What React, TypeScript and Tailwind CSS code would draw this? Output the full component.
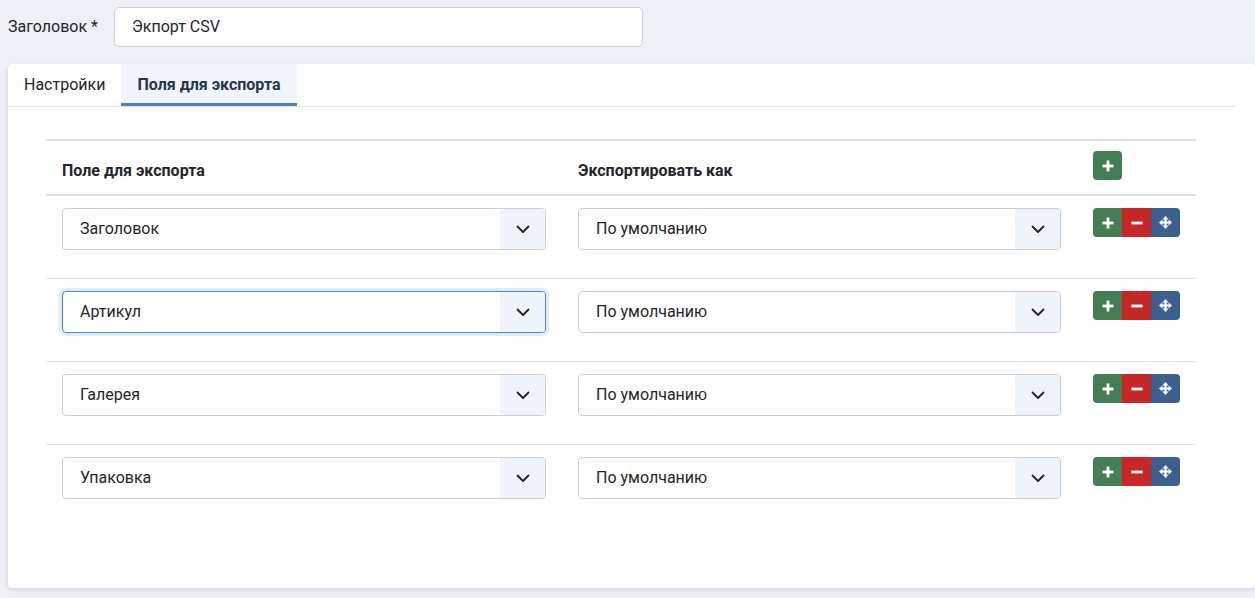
import React from "react";

const Chevron = () => (
  <svg width="14" height="9" viewBox="0 0 14 9" fill="none">
    <path d="M1.5 1.5 L7 7 L12.5 1.5" stroke="#1f2328" strokeWidth="1.8" strokeLinecap="round" strokeLinejoin="round" />
  </svg>
);

const Plus = () => (
  <svg width="12" height="12" viewBox="0 0 12 12">
    <rect x="4.6" y="0.5" width="2.8" height="11" fill="#fff" />
    <rect x="0.5" y="4.6" width="11" height="2.8" fill="#fff" />
  </svg>
);

const Minus = () => (
  <svg width="12" height="12" viewBox="0 0 12 12">
    <rect x="0.5" y="4.6" width="11" height="2.8" fill="#fff" />
  </svg>
);

const Move = () => (
  <svg width="13" height="13" viewBox="0 0 13 13">
    <rect x="5.4" y="2" width="2.2" height="9" fill="#fff" />
    <rect x="2" y="5.4" width="9" height="2.2" fill="#fff" />
    <polygon points="6.5,0 9.6,3.4 3.4,3.4" fill="#fff" />
    <polygon points="6.5,13 9.6,9.6 3.4,9.6" fill="#fff" />
    <polygon points="0,6.5 3.4,3.4 3.4,9.6" fill="#fff" />
    <polygon points="13,6.5 9.6,3.4 9.6,9.6" fill="#fff" />
  </svg>
);

function Select({ value, focused }: { value: string; focused?: boolean }) {
  return (
    <div
      className={
        "flex h-[42px] w-full items-stretch overflow-hidden rounded-[4px] border bg-white " +
        (focused ? "border-[#3b8ee8] shadow-[0_0_0_3px_#e6e8eb]" : "border-[#c3d0e2]")
      }
    >
      <div className="flex flex-1 items-center pl-[17px] text-[16px] text-[#22262a]">{value}</div>
      <div className="flex w-[45px] items-center justify-center bg-[#eff3fa]">
        <Chevron />
      </div>
    </div>
  );
}

function RowButtons() {
  return (
    <div className="flex h-[29px]">
      <button className="flex h-[29px] w-[29px] items-center justify-center rounded-l-[4px] bg-[#457d54]">
        <Plus />
      </button>
      <button className="flex h-[29px] w-[29px] items-center justify-center bg-[#c52827]">
        <Minus />
      </button>
      <button className="flex h-[29px] w-[29px] items-center justify-center rounded-r-[4px] bg-[#3c5f8e]">
        <Move />
      </button>
    </div>
  );
}

const rows = [
  { field: "Заголовок" },
  { field: "Артикул", focused: true },
  { field: "Галерея" },
  { field: "Упаковка", last: true },
];

export default function App() {
  return (
    <div className="h-[598px] overflow-hidden bg-[#edf1f7] font-['Roboto',sans-serif] text-[#22262a]">
      <div className="flex items-center pt-[7px]">
        <label className="w-[114px] pl-2 text-[16px]">Заголовок *</label>
        <div className="flex h-[40px] w-[529px] items-center rounded-[5px] border border-[#c9d3df] bg-white pl-[17px] text-[16px]">
          Экпорт CSV
        </div>
      </div>

      <div className="ml-2 mt-[17px] h-[524px] rounded-[4px] bg-white shadow-[0_2px_4px_rgba(120,140,180,0.25)]">
        <div className="mr-[20px] flex h-[43px] border-b border-[#dfe4ec]">
          <div className="flex items-center px-4 text-[16px] text-[#22262a]">Настройки</div>
          <div className="flex items-center border-b-[3px] border-[#4a7fc5] bg-[#f2f5f9] px-4 pt-[3px] text-[16px] font-bold text-[#1f3550]">
            Поля для экспорта
          </div>
        </div>

        <div className="pl-[38px] pt-[32px]">
          <div className="w-[1150px]">
            <div className="flex h-[57px] items-end border-y-2 border-[#dee2e6] pb-[11px]">
              <div className="w-[516px] px-4 text-[16px] font-bold leading-6">Поле для экспорта</div>
              <div className="w-[515px] px-4 text-[16px] font-bold leading-6">Экспортировать как</div>
              <div className="flex flex-1 items-end px-4 pb-[3px]">
                <button className="flex h-[29px] w-[29px] items-center justify-center rounded-[4px] bg-[#457d54]">
                  <Plus />
                </button>
              </div>
            </div>
            {rows.map((r) => (
              <div
                key={r.field}
                className={"flex h-[83px] items-start pt-[12px] " + (r.last ? "" : "border-b border-[#dee2e6]")}
              >
                <div className="w-[516px] px-4">
                  <Select value={r.field} focused={r.focused} />
                </div>
                <div className="w-[515px] px-4">
                  <Select value="По умолчанию" />
                </div>
                <div className="flex-1 px-4">
                  <RowButtons />
                </div>
              </div>
            ))}
          </div>
        </div>
      </div>
    </div>
  );
}
